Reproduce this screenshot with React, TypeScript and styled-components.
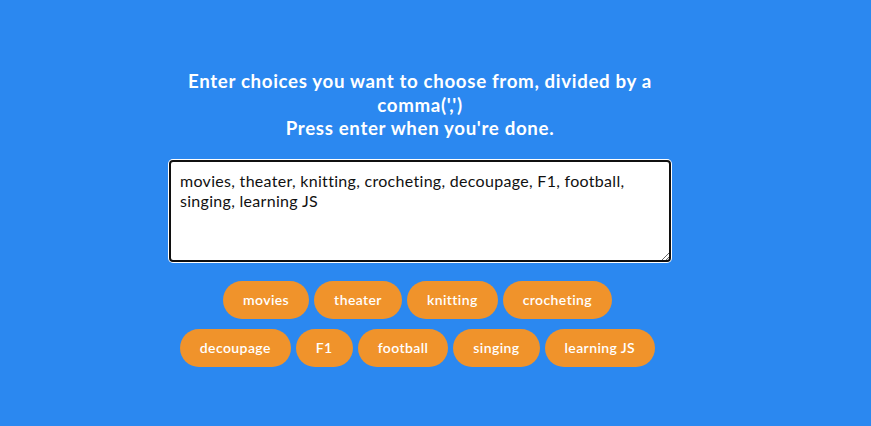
import React from "react";
import styled, { createGlobalStyle } from "styled-components";

const GlobalStyle = createGlobalStyle`
  * { box-sizing: border-box; }
  html, body { margin: 0; padding: 0; }
  body {
    background: #2b88f0;
    font-family: "Lato", "Noto Sans", sans-serif;
    height: 426px;
    overflow: hidden;
  }
`;

const Page = styled.main`
  display: flex;
  justify-content: center;
  padding: 60px 31px 0 0;
`;

const Container = styled.div`
  width: 500px;
`;

const Title = styled.h3`
  color: #fff;
  margin: 10px 0 20px;
  text-align: center;
  font-size: 18.72px;
  font-weight: 700;
  line-height: 23.5px;
  letter-spacing: 0.65px;
`;

const ChoicesInput = styled.textarea`
  display: block;
  width: 100%;
  height: 100px;
  border: none;
  border-radius: 3px;
  font-family: inherit;
  font-size: 16px;
  line-height: 20px;
  letter-spacing: 0.3px;
  color: #111;
  padding: 10px;
  margin: 0 0 20px;
  outline: 2px solid #101010;
  outline-offset: -1px;
  box-shadow: 0 0 0 2px #fff;
`;

const Tags = styled.div`
  text-align: center;
`;

const Tag = styled.span`
  display: inline-block;
  background: #f0932b;
  color: #fff;
  border-radius: 50px;
  padding: 10px 20px;
  margin: 0 5px 10px 0;
  font-size: 14px;
  font-weight: 600;
  line-height: 18px;
  letter-spacing: 0.4px;
`;

const choices = "movies, theater, knitting, crocheting, decoupage, F1, football, singing, learning JS";

export default function App() {
  const tags = choices.split(",").map((s) => s.trim()).filter(Boolean);
  return (
    <>
      <GlobalStyle />
      <Page>
        <Container>
          <Title>
            Enter choices you want to choose from, divided by a comma(',')
            <br />
            Press enter when you're done.
          </Title>
          <ChoicesInput defaultValue={choices} />
          <Tags>
            {tags.map((t) => (
              <Tag key={t}>{t}</Tag>
            ))}
          </Tags>
        </Container>
      </Page>
    </>
  );
}
